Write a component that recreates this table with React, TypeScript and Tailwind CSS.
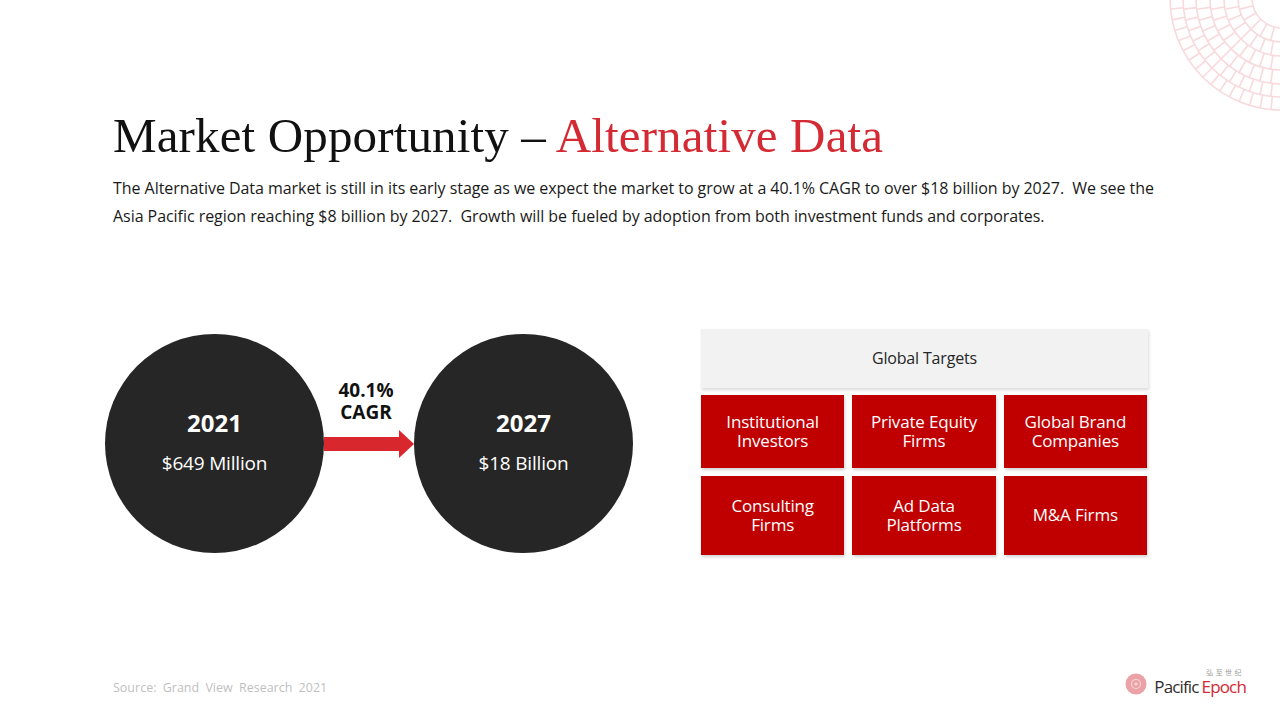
import React from "react"

const targets = [
  { label: ["Institutional", "Investors"] },
  { label: ["Private Equity", "Firms"] },
  { label: ["Global Brand", "Companies"] },
  { label: ["Consulting", "Firms"] },
  { label: ["Ad Data", "Platforms"] },
  { label: ["M&A Firms"] },
]

function CornerPattern() {
  const cx = 1282
  const cy = -2
  const rings = [30, 44, 58, 72, 86, 99, 112]
  const spokes: React.ReactNode[] = []
  // radial separators, staggered a bit per ring like the original tiles
  for (let r = 0; r < rings.length - 1; r++) {
    const r1 = rings[r]
    const r2 = rings[r + 1]
    const count = 6 + r * 2
    for (let i = 0; i <= count; i++) {
      const a = (Math.PI / 2) * (i / count) + Math.PI / 2
      spokes.push(
        <line
          key={`${r}-${i}`}
          x1={cx + Math.cos(a) * r1}
          y1={cy + Math.sin(a) * r1}
          x2={cx + Math.cos(a) * r2}
          y2={cy + Math.sin(a) * r2}
        />
      )
    }
  }
  return (
    <svg className="absolute top-0 right-0" width="120" height="120" viewBox="1160 0 120 120">
      <g stroke="#f8d9dc" strokeWidth="1.6" fill="none">
        {rings.map((r) => (
          <circle key={r} cx={cx} cy={cy} r={r} />
        ))}
        {spokes}
      </g>
    </svg>
  )
}

function Circle({ year, value }: { year: string; value: string }) {
  return (
    <div className="w-[219px] h-[219px] rounded-full bg-[#262626] flex flex-col items-center justify-center text-white shrink-0">
      <div className="text-[24px] font-bold leading-none mt-[-3px]">{year}</div>
      <div className="text-[19px] leading-none mt-[19px] tracking-[-0.01em]">{value}</div>
    </div>
  )
}

export default function App() {
  return (
    <div
      className="relative w-[1280px] h-[720px] overflow-hidden bg-white flex flex-col"
      style={{ fontFamily: '"Open Sans", "Noto Sans", sans-serif' }}
    >
      <CornerPattern />

      <div className="pl-[113px] pt-[108px]">
        <h1
          className="text-[49px] leading-[56px] text-[#111111] tracking-[0.003em]"
          style={{ fontFamily: '"Liberation Serif", "DejaVu Serif", serif' }}
        >
          Market Opportunity – <span className="text-[#d42a33]">Alternative Data</span>
        </h1>
        <p className="mt-[10px] text-[16px] leading-[28px] text-[#1a1a1a] tracking-[-0.003em] w-[1120px]">
          The Alternative Data market is still in its early stage as we expect the market to grow at a 40.1% CAGR to over $18 billion by 2027.&nbsp; We see the
          <br />
          Asia Pacific region reaching $8 billion by 2027.&nbsp; Growth will be fueled by adoption from both investment funds and corporates.
        </p>
      </div>

      <div className="flex items-center mt-[102px] pl-[105px]">
        <div className="flex">
          <Circle year="2021" value="$649 Million" />
          <div className="w-[90px] flex flex-col items-center pt-[45px]">
            <div className="text-[19px] font-bold leading-[22px] text-[#111111] text-center mr-[6px]">
              40.1%
              <br />
              CAGR
            </div>
            <svg className="mt-[7px]" width="90" height="28" viewBox="0 0 90 28">
              <rect x="0" y="7" width="76" height="14" fill="#d9272e" />
              <polygon points="75,0 90,14 75,28" fill="#d9272e" />
            </svg>
          </div>
          <Circle year="2027" value="$18 Billion" />
        </div>

        <div className="ml-[68px] w-[447px] flex flex-col mt-[-3px]">
          <div className="h-[59px] bg-[#f2f2f2] shadow-[1px_2px_3px_rgba(0,0,0,0.15)] flex items-center justify-center text-[16px] text-[#262626] tracking-[-0.01em] pb-[1px]">
            Global Targets
          </div>
          <div className="grid grid-cols-3 gap-x-[8px] gap-y-[8px] mt-[7px] w-[446px]">
            {targets.map((t, i) => (
              <div
                key={i}
                className={`${i < 3 ? "h-[73px]" : "h-[79px]"} bg-[#c00000] shadow-[1px_2px_3px_rgba(0,0,0,0.18)] flex items-center justify-center text-white text-[17px] leading-[19px] text-center tracking-[-0.01em] pb-[2px]`}
              >
                <p>
                  {t.label[0]}
                  {t.label[1] && (
                    <>
                      <br />
                      {t.label[1]}
                    </>
                  )}
                </p>
              </div>
            ))}
          </div>
        </div>
      </div>

      <div className="mt-auto mb-[23px] pl-[113px] pr-[34px] flex items-end justify-between">
        <div className="text-[12.5px] text-[#bfbfbf] leading-none mb-[3px] [word-spacing:3px]">
          Source: Grand View Research 2021
        </div>
        <div className="flex items-center">
          <svg width="22" height="22" viewBox="0 0 22 22" className="mr-[7px] mt-[2px]">
            <circle cx="11" cy="11" r="10.5" fill="#eba1a5" />
            <circle cx="11" cy="11" r="4.5" fill="none" stroke="#f7d5d7" strokeWidth="1.2" />
            <circle cx="11" cy="11" r="1.6" fill="#f7d5d7" />
          </svg>
          <div className="flex flex-col">
            <div
              className="text-[7px] leading-none text-[#9a9a9a] self-end mr-[2px] tracking-[0.35em]"
              style={{ fontFamily: '"Noto Sans CJK SC", sans-serif' }}
            >
              弘至世纪
            </div>
            <div className="text-[17px] leading-[20px] tracking-[-0.05em] mt-[1px]">
              <span className="text-[#2e2e2e]">Pacific</span>
              <span className="text-[#d42a33] ml-[3px]">Epoch</span>
            </div>
          </div>
        </div>
      </div>
    </div>
  )
}
